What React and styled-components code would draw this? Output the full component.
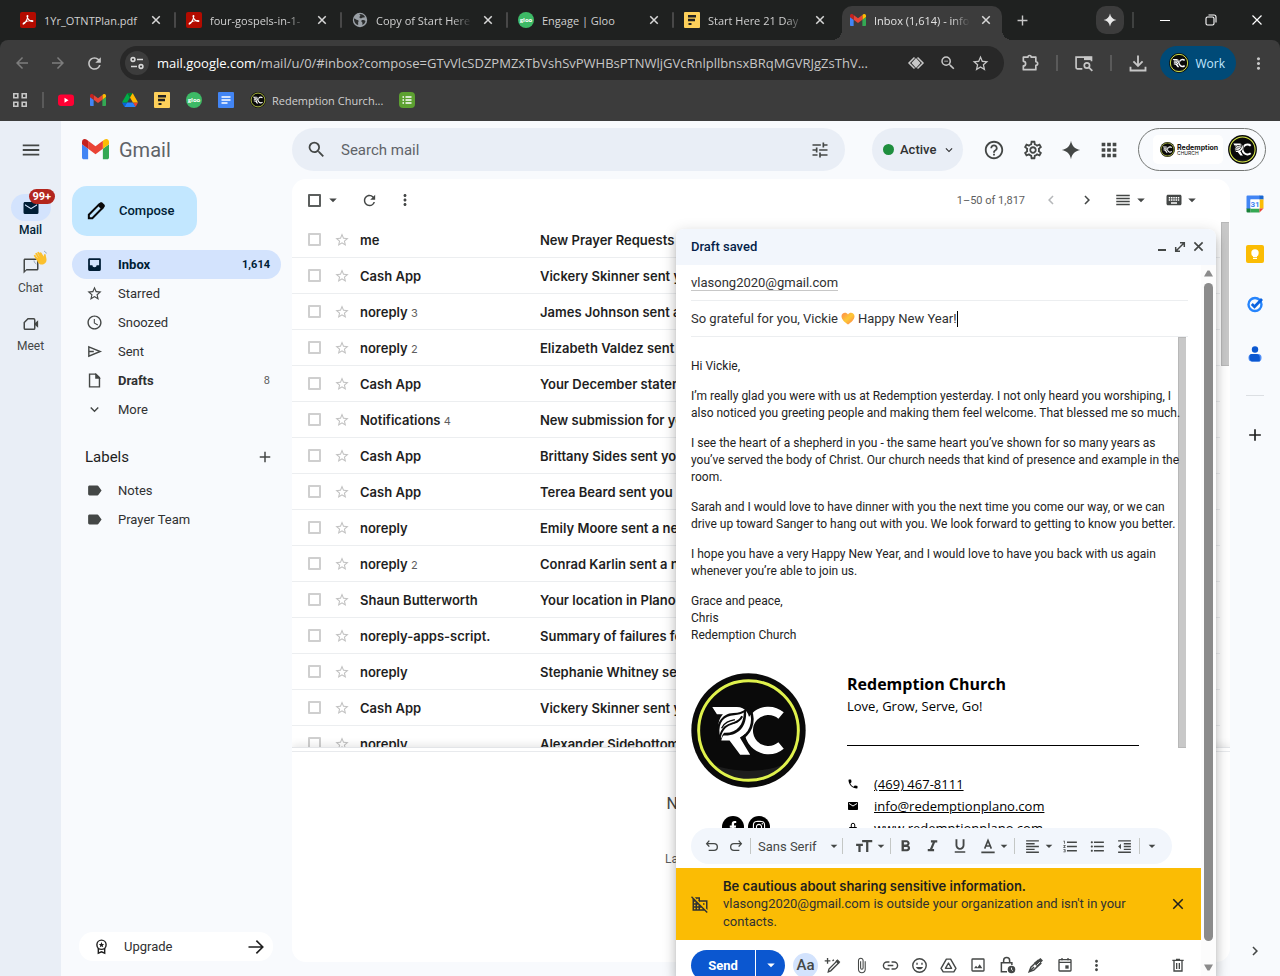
import React, { useState } from 'react';
import styled, { createGlobalStyle, css } from 'styled-components';
import {
  MdAccessTime,
  MdAdd,
  MdApps,
  MdArrowBack,
  MdArrowDropDown,
  MdArrowForward,
  MdAttachFile,
  MdChatBubbleOutline,
  MdChevronLeft,
  MdChevronRight,
  MdClose,
  MdDomainDisabled,
  MdEmail,
  MdFormatAlignLeft,
  MdFormatBold,
  MdFormatIndentDecrease,
  MdFormatItalic,
  MdFormatListBulleted,
  MdFormatListNumbered,
  MdFormatUnderlined,
  MdHelpOutline,
  MdKeyboard,
  MdKeyboardArrowDown,
  MdLabel,
  MdMenu,
  MdMoreVert,
  MdPhone,
  MdRefresh,
  MdReorder,
  MdSearch,
  MdStarBorder,
  MdTune,
  MdZoomOut,
  MdOutlineSettings,
} from 'react-icons/md';
import { FaFacebookF, FaInstagram } from 'react-icons/fa';

const GlobalStyle = createGlobalStyle`
  *, *::before, *::after {
    box-sizing: border-box;
  }
  body {
    margin: 0;
    overflow: hidden;
    font-family: Roboto, 'Liberation Sans', sans-serif;
    font-size: 13px;
    color: #1f1f1f;
  }
  button, input, select {
    font: inherit;
    color: inherit;
  }
  svg {
    display: block;
    flex: none;
  }
`;

const uiFont = `'Open Sans', 'Noto Sans', sans-serif`;

const Window = styled.div`
  height: 100vh;
  display: flex;
  flex-direction: column;
  background: #f8fafd;
`;

const IconButton = styled.button`
  display: flex;
  align-items: center;
  justify-content: ${p => (p.$pair ? 'flex-end' : 'center')};
  flex: none;
  width: ${p => p.$w || 28}px;
  height: ${p => p.$h || 28}px;
  padding: 0;
  border: none;
  border-radius: ${p => p.$radius || 14}px;
  background: ${p => p.$bg || 'transparent'};
  color: ${p => p.$color || '#444746'};
  cursor: pointer;
`;

/* ---------- browser frame ---------- */

const TabStrip = styled.div`
  display: flex;
  align-items: flex-end;
  height: 40px;
  flex: none;
  padding-left: 12px;
  background: #1f2120;
  font-family: ${uiFont};
  font-size: 11px;
`;

const Tab = styled.div`
  position: relative;
  display: flex;
  align-items: center;
  flex: 0 1 160px;
  min-width: 0;
  height: 34px;
  padding: 0 8px 6px;
  gap: 8px;
  color: #d0d0d0;
  border-radius: 10px 10px 0 0;
  ${p =>
    p.$active &&
    css`
      background: #3c3c3c;
      color: #e3e3e3;
      &::before,
      &::after {
        content: '';
        position: absolute;
        bottom: 0;
        width: 10px;
        height: 10px;
      }
      &::before {
        left: -10px;
        background: radial-gradient(circle at 0 0, transparent 10px, #3c3c3c 10px);
      }
      &::after {
        right: -10px;
        background: radial-gradient(circle at 100% 0, transparent 10px, #3c3c3c 10px);
      }
    `}
`;

const TabTitle = styled.span`
  flex: 1;
  min-width: 0;
  overflow: hidden;
  white-space: nowrap;
  ${p =>
    p.$fade &&
    css`
      mask-image: linear-gradient(90deg, #000 80%, transparent);
    `}
`;

const TabDivider = styled.span`
  flex: none;
  width: 2px;
  height: 16px;
  margin: 0 2px 12px;
  border-radius: 1px;
  background: ${p => (p.$hidden ? 'transparent' : '#484848')};
`;

const StripTools = styled.div`
  display: flex;
  align-items: center;
  flex: 1;
  height: 28px;
  margin-bottom: 6px;
  padding-left: 6px;
`;

const Spacer = styled.div`
  flex: 1;
`;

const Divider = styled.span`
  flex: none;
  width: ${p => p.$w || 2}px;
  height: ${p => p.$h || 16}px;
  margin: 0 ${p => p.$m || 0}px;
  background: ${p => p.$color || '#5a5a5a'};
`;

const Frame = styled.div`
  flex: none;
  background: #1f2120;
`;

const Toolbar = styled.div`
  display: flex;
  align-items: center;
  height: 46px;
  padding: 0 8px;
  background: #3c3c3c;
  border-radius: 8px 8px 0 0;
  font-family: ${uiFont};
`;

const Omnibox = styled.div`
  display: flex;
  align-items: center;
  flex: 1;
  min-width: 0;
  height: 34px;
  margin: 0 12px;
  padding: 0 8px 0 5px;
  border-radius: 17px;
  background: #282828;
  color: #c7c7c7;
`;

const Url = styled.div`
  flex: 1;
  min-width: 0;
  margin-left: 8px;
  overflow: hidden;
  white-space: nowrap;
  font-size: 13px;
  b {
    font-weight: 400;
    color: #fff;
  }
`;

const ProfileButton = styled.button`
  display: flex;
  align-items: center;
  gap: 6px;
  height: 34px;
  margin: 0 8px;
  padding: 0 11px 0 9px;
  border: none;
  border-radius: 17px;
  background: #004a77;
  color: #c2e7ff;
  font-size: 12px;
`;

const Bookmarks = styled.nav`
  display: flex;
  align-items: center;
  height: 35px;
  padding: 0 12px 7px;
  gap: 16px;
  background: #3c3c3c;
  color: #d0d0d0;
  font-family: ${uiFont};
`;

const Bookmark = styled.a`
  display: flex;
  align-items: center;
  gap: 6px;
  color: inherit;
  font-size: 11px;
  text-decoration: none;
`;

/* ---------- gmail shell ---------- */

const Gmail = styled.div`
  position: relative;
  display: flex;
  flex: 1;
  min-height: 0;
  background: #f8fafd;
`;

const AppRail = styled.nav`
  display: flex;
  flex-direction: column;
  align-items: center;
  flex: none;
  width: 61px;
  padding-top: 15px;
  background: #e9eef6;
`;

const RailItems = styled.div`
  margin-top: 30px;
`;

const RailItem = styled.a`
  display: flex;
  flex-direction: column;
  align-items: center;
  height: 58px;
  color: ${p => (p.$active ? '#001d35' : '#444746')};
  font-size: 12px;
  font-weight: ${p => (p.$active ? 500 : 400)};
  line-height: 18px;
  text-decoration: none;
`;

const RailIcon = styled.span`
  position: relative;
  display: flex;
  align-items: center;
  justify-content: center;
  width: 40px;
  height: 27px;
  border-radius: 14px;
  background: ${p => (p.$active ? '#d3e3fd' : 'transparent')};
`;

const Badge = styled.span`
  position: absolute;
  left: 18px;
  top: -5px;
  height: 15px;
  padding: 0 4px;
  border-radius: 8px;
  background: #b3261e;
  color: #fff;
  font-size: 11px;
  font-weight: 700;
  line-height: 15px;
`;

const Wave = styled.svg`
  position: absolute;
  left: 22px;
  top: -2px;
`;

const Sidebar = styled.aside`
  display: flex;
  flex-direction: column;
  flex: none;
  width: 231px;
  padding: 7px 11px 15px;
`;

const Brand = styled.div`
  display: flex;
  align-items: center;
  gap: 10px;
  height: 43px;
  padding-left: 10px;
  color: #5f6368;
  font-size: 20px;
`;

const ComposeButton = styled.button`
  display: flex;
  align-items: center;
  align-self: flex-start;
  gap: 12px;
  width: 125px;
  height: 50px;
  margin: 15px 0 14px;
  padding: 0 13px 1px;
  border: none;
  border-radius: 15px;
  background: #c2e7ff;
  color: #001d35;
  font-weight: 500;
`;

const NavItem = styled.a`
  display: flex;
  align-items: center;
  gap: 15px;
  height: 29px;
  padding: 0 11px 0 14px;
  border-radius: 15px;
  background: ${p => (p.$active ? '#d3e3fd' : 'transparent')};
  color: ${p => (p.$active ? '#001d35' : '#303132')};
  font-weight: ${p => (p.$bold ? 700 : 400)};
  text-decoration: none;
  svg {
    color: ${p => (p.$active ? '#001d35' : '#444746')};
  }
`;

const NavCount = styled.span`
  margin-left: auto;
  color: ${p => (p.$active ? '#001d35' : '#5e5e5e')};
  font-size: 11px;
  font-weight: ${p => (p.$active ? 700 : 400)};
`;

const LabelsHead = styled.div`
  display: flex;
  align-items: center;
  justify-content: space-between;
  height: 29px;
  margin: 18px 2px 5px 13px;
  font-size: 15px;
`;

const Upgrade = styled.a`
  display: flex;
  align-items: center;
  gap: 14px;
  height: 29px;
  margin: auto 8px 0 7px;
  padding: 0 8px 0 14px;
  border-radius: 14px;
  background: #fff;
  color: #303132;
  text-decoration: none;
`;

const Center = styled.div`
  display: flex;
  flex-direction: column;
  flex: 1;
  min-width: 0;
`;

const Header = styled.header`
  display: flex;
  align-items: center;
  flex: none;
  height: 58px;
  padding: 0 14px 1px 0;
`;

const SearchBox = styled.label`
  display: flex;
  align-items: center;
  gap: 12px;
  flex: 0 1 553px;
  height: 43px;
  padding: 0 15px 0 14px;
  border-radius: 22px;
  background: #e9eef6;
  color: #444746;
  input {
    flex: 1;
    min-width: 0;
    padding: 0 2px;
    border: none;
    outline: none;
    background: transparent;
    font-size: 15px;
  }
  input::placeholder {
    color: #5f6368;
    opacity: 1;
  }
`;

const Status = styled.button`
  display: flex;
  align-items: center;
  gap: 6px;
  height: 43px;
  margin: 0 12px 0 27px;
  padding: 0 7px 0 11px;
  border: none;
  border-radius: 22px;
  background: #e9eef6;
  color: #303132;
  font-weight: 500;
  i {
    width: 11px;
    height: 11px;
    border-radius: 50%;
    background: #1e8e3e;
  }
`;

const HeaderTools = styled.div`
  display: flex;
  align-items: center;
  gap: 2px;
`;

const Account = styled.button`
  display: flex;
  align-items: center;
  gap: 5px;
  height: 43px;
  margin-left: auto;
  padding: 0 8px 0 14px;
  border: 1px solid #747775;
  border-radius: 22px;
  background: transparent;
`;

const OrgLogo = styled.span`
  display: flex;
  align-items: center;
  gap: 2px;
  width: 70px;
  height: 29px;
  padding-left: 7px;
  border-radius: 5px;
  background: #fff;
  color: #111;
  font-family: Inter, sans-serif;
  font-size: 7px;
  font-weight: 700;
  line-height: 7px;
  text-align: left;
  small {
    display: block;
    font-size: 5px;
    font-weight: 400;
    line-height: 5px;
  }
`;

const Body = styled.div`
  display: flex;
  flex: 1;
  min-height: 0;
`;

const MailPanel = styled.main`
  display: flex;
  flex-direction: column;
  flex: 1;
  min-width: 0;
  margin-bottom: 14px;
  border-radius: 14px;
  background: #fff;
  overflow: hidden;
`;

const ListToolbar = styled.div`
  display: flex;
  align-items: center;
  flex: none;
  height: 43px;
  padding: 0 19px 1px 16px;
`;

const Check = styled.input`
  appearance: none;
  flex: none;
  width: 13px;
  height: 13px;
  margin: 0 1px 0 0;
  border: 2px solid ${p => (p.$dark ? '#5c5f5e' : '#cfcfcf')};
  border-radius: 1px;
  background: #fff;
`;

const PageInfo = styled.span`
  margin: 0 12px 0 auto;
  color: #5e5e5e;
  font-size: 11px;
`;

const ListScroll = styled.div`
  display: flex;
  align-items: flex-start;
  flex: 1;
  min-height: 0;
  overflow: hidden;
`;

const MailList = styled.ul`
  flex: 1;
  min-width: 0;
  margin: 0;
  padding: 0;
  list-style: none;
`;

const MailRow = styled.li`
  display: flex;
  align-items: center;
  height: 36px;
  padding-left: 16px;
  border-bottom: 1px solid #eceef0;
  font-family: Inter, sans-serif;
  font-weight: 600;
  white-space: nowrap;
`;

const StarButton = styled.button`
  margin: 0 10px 0 12px;
  padding: 0;
  border: none;
  background: none;
  color: #c2c2c2;
`;

const Sender = styled.span`
  flex: none;
  width: 180px;
  small {
    color: #5e5e5e;
    font-size: 11px;
    font-weight: 400;
  }
`;

const Subject = styled.span`
  overflow: hidden;
`;

const ListThumb = styled.div`
  flex: none;
  width: 8px;
  height: 144px;
  margin: 0 1px;
  border: 1px solid #b8b8b8;
  border-right: none;
  background: #c8c8c8;
`;

const Preview = styled.section`
  flex: none;
  height: 215px;
  padding-top: 40px;
  border-top: 1px solid #e3e5e8;
  box-shadow: inset 0 3px 0 #fff, inset 0 4px 0 #e8eaed, 0 -2px 8px rgba(0, 0, 0, 0.1);
  color: #444746;
  font-size: 16px;
  text-align: center;
  p {
    margin: 7px 0 35px;
    line-height: 18px;
  }
  small {
    font-size: 12px;
    color: #5e5e5e;
  }
`;

const SidePanel = styled.aside`
  display: flex;
  flex-direction: column;
  align-items: center;
  flex: none;
  width: 50px;
  padding: 14px 0 11px;
  gap: 28px;
  hr {
    width: 18px;
    margin: 2px 0;
    border: none;
    border-top: 1px solid #dcdfe3;
  }
`;

const PanelLink = styled.button`
  display: flex;
  padding: 2px;
  border: none;
  background: none;
`;

/* ---------- compose window ---------- */

const Compose = styled.section`
  position: absolute;
  right: 64px;
  top: 108px;
  bottom: 0;
  width: 540px;
  display: flex;
  flex-direction: column;
  border-radius: 8px 8px 0 0;
  background: #fff;
  box-shadow: 0 8px 10px 1px rgba(0, 0, 0, 0.14), 0 3px 14px 2px rgba(0, 0, 0, 0.12),
    0 5px 5px -3px rgba(0, 0, 0, 0.2);
`;

const ComposeHead = styled.header`
  display: flex;
  align-items: center;
  flex: none;
  height: 36px;
  padding: 0 9px 1px 15px;
  border-radius: 8px 8px 0 0;
  background: #f2f6fc;
  h2 {
    margin: 0 auto 0 0;
    color: #041e49;
    font-size: 13px;
    font-weight: 500;
  }
`;

const ComposeBody = styled.div`
  display: flex;
  flex: 1;
  min-height: 0;
`;

const ComposeMain = styled.div`
  display: flex;
  flex-direction: column;
  flex: 1;
  min-width: 0;
`;

const Field = styled.div`
  display: flex;
  align-items: center;
  flex: none;
  height: 36px;
  margin: 0 13px 0 15px;
  border-bottom: 1px solid #eceef0;
  color: #303132;
  input {
    field-sizing: content;
    padding: 0;
    border: none;
    outline: none;
    background: transparent;
  }
`;

const Recipient = styled.span`
  border-bottom: 1px solid #c7c7c7;
`;

const HeartSlot = styled.svg`
  margin: 0 3px;
`;

const Caret = styled.span`
  width: 1px;
  height: 16px;
  background: #000;
`;

const MessageWrap = styled.div`
  display: flex;
  flex: 1;
  min-height: 0;
  padding: 0 15px;
  overflow: hidden;
`;

const Message = styled.div`
  z-index: 1;
  flex: 1;
  min-width: 0;
  padding-top: 21px;
  font-size: 12px;
  line-height: 17px;
  color: #222;
  outline: none;
  white-space: nowrap;
  p {
    margin: 0 0 13px;
  }
`;

const MessageThumb = styled.div`
  flex: none;
  width: 8px;
  height: 411px;
  border: 1px solid #b8b8b8;
  border-right: none;
  background: #c8c8c8;
`;

const Signature = styled.div`
  display: flex;
  gap: 41px;
  margin-top: 29px;
  font-family: 'Open Sans', sans-serif;
  font-size: 13px;
  line-height: 22px;
  color: #000;
`;

const SignatureLogo = styled.div`
  width: 115px;
`;

const Socials = styled.div`
  display: flex;
  justify-content: center;
  gap: 4px;
  margin: 28px 6px 0 0;
`;

const SocialLink = styled.a`
  display: flex;
  align-items: center;
  justify-content: center;
  width: 22px;
  height: 22px;
  border-radius: 50%;
  background: #000;
  color: #fff;
`;

const SignatureText = styled.div`
  width: 292px;
  h3 {
    margin: 0;
    font-size: 16px;
    font-weight: 700;
  }
  hr {
    margin: 28px 0 27px;
    border: none;
    border-top: 1px solid #000;
  }
`;

const ContactLine = styled.div`
  display: flex;
  align-items: center;
  gap: 15px;
  a {
    color: inherit;
  }
`;

const FormatBar = styled.div`
  display: flex;
  align-items: center;
  flex: none;
  height: 36px;
  margin: 0 29px 4px 15px;
  padding: 0 9px;
  border-radius: 18px;
  background: #f2f6fc;
`;

const FontPicker = styled.label`
  display: flex;
  align-items: center;
  flex: none;
  width: 84px;
  margin-left: 5px;
  color: #444746;
  select {
    appearance: none;
    flex: 1;
    min-width: 0;
    padding: 0;
    border: none;
    background: transparent;
  }
`;

const Caution = styled.div`
  display: flex;
  align-items: center;
  flex: none;
  height: 72px;
  padding: 0 15px;
  gap: 14px;
  background: #fbbc04;
  color: #303132;
  line-height: 18px;
  p {
    flex: 1;
    margin: 0;
  }
  b {
    display: block;
    color: #1f1f1f;
    font-family: Inter, sans-serif;
    font-weight: 600;
  }
`;

const SendBar = styled.div`
  display: flex;
  align-items: center;
  flex: none;
  height: 30px;
  margin: 10px 0 -4px;
  padding: 0 9px 0 15px;
`;

const SendButton = styled.button`
  height: 31px;
  width: 64px;
  padding: 0;
  border: none;
  border-radius: 16px 0 0 16px;
  background: #0b57d0;
  color: #fff;
  font-weight: 700;
`;

const SendMore = styled(SendButton)`
  display: flex;
  align-items: center;
  justify-content: center;
  width: 29px;
  margin: 0 8px 0 1px;
  border-radius: 0 16px 16px 0;
`;

const TextTools = styled(IconButton)`
  font-size: 15px;
  font-weight: 500;
`;

const ComposeScroll = styled.div`
  display: flex;
  flex-direction: column;
  align-items: center;
  flex: none;
  width: 15px;
  padding: 4px 0;
  gap: 5px;
  background: #fcfcfc;
`;

const ComposeThumb = styled.div`
  width: 9px;
  flex: 1;
  margin-bottom: 17px;
  border-radius: 5px;
  background: #8b8b8b;
`;

/* ---------- drawings ---------- */

const Svg = ({ size = 16, box = 24, children, ...rest }) => (
  <svg width={size} height={size} viewBox={`0 0 ${box} ${box}`} fill="none" aria-hidden="true" {...rest}>
    {children}
  </svg>
);

const GmailLogo = ({ width = 16 }) => (
  <svg width={width} height={width * 0.75} viewBox="52 42 88 66" aria-hidden="true">
    <path fill="#4285f4" d="M58 108h14V74L52 59v43c0 3.32 2.69 6 6 6" />
    <path fill="#34a853" d="M120 108h14c3.32 0 6-2.69 6-6V59l-20 15" />
    <path fill="#fbbc04" d="M120 48v26l20-15v-8c0-7.42-8.47-11.65-14.4-7.2" />
    <path fill="#ea4335" d="M72 74V48l24 18 24-18v26L96 92" />
    <path fill="#c5221f" d="M52 51v8l20 15V48l-5.600-4.200c-5.940-4.450-14.400-.22-14.400 7.200" />
  </svg>
);

const ChurchLogo = ({ size = 16, ring = 9 }) => (
  <svg width={size} height={size} viewBox="0 0 346 346" aria-hidden="true">
    <circle cx="173" cy="173" r="172" fill="#0a0a0a" />
    <path fill="#1d1d1d" d="M60 274c66 26 160 30 230-4-50 68-172 72-230 4z" />
    <circle cx="173" cy="173" r="150" fill="none" stroke="#e0f24c" strokeWidth={ring} />
    {/* stem of the R, the leaf is cut out of it below */}
    <path
      fill="#fff"
      d="M64 102H138C164 102 178 124 176 150C175 172 164 187 147 194L178 246H148L116 203H82V166C82 146 86 136 96 124H78Z"
    />
    <path fill="#0a0a0a" d="M78 206C70 156 92 120 128 120C144 120 154 116 165 108C171 152 150 190 98 188C94 192 92 198 91 206Z" />
    <path fill="#fff" d="M86 184C82 148 100 128 130 127C144 126 152 124 159 119C158 156 138 182 100 180C96 183 93 190 91 197Z" />
    <path fill="none" stroke="#0a0a0a" strokeWidth="6" d="M86 196C94 160 112 156 130 150C142 146 150 138 154 130" />
    <path fill="none" stroke="#0a0a0a" strokeWidth="4" d="M92 166C100 148 116 144 132 140" />
    <path fill="none" stroke="#fff" strokeWidth="25" d="M271 128A59 59 0 1 0 271 218" />
    <path fill="none" stroke="#0a0a0a" strokeWidth="8" d="M172 100C194 132 186 174 156 194L190 252" />
  </svg>
);

const PdfIcon = () => (
  <Svg box={16}>
    <rect width="16" height="16" rx="2" fill="#b30b00" />
    <path
      d="M3.500 12c1-.3 3.800-3.500 4.300-7.800.1-1-.9-.9-.7.200.3 2 2.300 4.600 5 5 1.200.1 1-.9-.3-.9-3 0-6.300 1-8 2.500-.7.700-.9 1.200-.3 1z"
      stroke="#fff"
      strokeWidth="1.200"
    />
  </Svg>
);

const GlobeIcon = () => (
  <Svg box={16}>
    <circle cx="8" cy="8" r="7.200" fill="#9aa0a6" />
    <path
      fill="#2b2d2d"
      d="M2 6.500c1.500 0 2 1.500 3.500 1.500 1 0 1.500 1 .8 2-.5.800.2 1.500-.2 3C3.500 12.500 1.800 9.500 2 6.500zM7 2c3-.3 5 1 6 3-1 .8-2 .2-3 1-.8.600-2 .5-2.500-.5C7.200 4.500 8.500 4 8.300 3.200 8 2.500 7.300 2.500 7 2zM9.500 8.500c1.500-.8 3-.2 4 .5-.3 1.800-1.500 3.400-3 4-.5-1 .3-1.700-.2-2.500-.6-.7-1.500-1.300-.8-2z"
    />
  </Svg>
);

const GlooText = styled.span`
  display: flex;
  align-items: center;
  justify-content: center;
  flex: none;
  width: 16px;
  height: 16px;
  padding-bottom: 1px;
  border-radius: 50%;
  background: #3dba66;
  color: #fff;
  font-size: 6px;
  font-weight: 700;
`;

const FIcon = () => (
  <Svg box={16}>
    <rect width="16" height="16" rx="1" fill="#fdd05a" />
    <path fill="#222" d="M4 3h8v2.500H4zM4 6.700h7v2.500H4zM4.500 11h3v2h-3z" />
  </Svg>
);

const DocsIcon = () => (
  <Svg box={16}>
    <rect width="16" height="16" rx="1" fill="#4285f4" />
    <path d="M3.500 5h9M3.500 8h9M3.500 11h6" stroke="#fff" strokeWidth="1.500" />
  </Svg>
);

const YoutubeIcon = () => (
  <Svg box={16}>
    <rect y="2.500" width="16" height="11.500" rx="3" fill="#ff0033" />
    <path fill="#fff" d="M6.500 5.800v4.900l4-2.450z" />
  </Svg>
);

const DriveIcon = () => (
  <svg width="16" height="14" viewBox="0 0 87.3 78" aria-hidden="true">
    <path fill="#0066da" d="m6.600 66.850 3.850 6.650c.8 1.400 1.950 2.500 3.300 3.300l13.750-23.800h-27.500c0 1.550.4 3.100 1.200 4.500z" />
    <path fill="#00ac47" d="m43.650 25-13.750-23.800c-1.350.8-2.500 1.900-3.300 3.300l-25.400 44a9.060 9.060 0 0 0-1.200 4.500h27.500z" />
    <path fill="#ea4335" d="m73.550 76.800c1.350-.8 2.500-1.900 3.300-3.300l1.600-2.750 7.650-13.250c.8-1.400 1.200-2.950 1.200-4.500h-27.500l5.850 11.500z" />
    <path fill="#00832d" d="m43.650 25 13.750-23.800c-1.350-.8-2.900-1.200-4.500-1.200h-18.500c-1.600 0-3.150.45-4.500 1.200z" />
    <path fill="#2684fc" d="m59.800 53h-32.300l-13.750 23.800c1.350.8 2.900 1.200 4.500 1.200h50.800c1.600 0 3.150-.45 4.500-1.200z" />
    <path fill="#ffba00" d="m73.400 26.500-12.700-22c-.8-1.400-1.950-2.500-3.300-3.300l-13.750 23.800 16.150 28h27.450c0-1.550-.4-3.100-1.200-4.500z" />
  </svg>
);

const ListAppIcon = () => (
  <Svg box={16}>
    <rect width="16" height="16" rx="4" fill="#5da131" />
    <path d="M3.500 5h1.500M3.500 8h1.500M3.500 11h1.500M6.500 5h6M6.500 8h6M6.500 11h6" stroke="#fff" strokeWidth="1.500" />
  </Svg>
);

const GridIcon = () => (
  <Svg box={16} stroke="#c7c7c7" strokeWidth="1.600">
    <path d="M1.800 1.800h4v4h-4zM10.200 1.800h4v4h-4zM1.800 10.200h4v4h-4zM10.200 10.200h4v4h-4z" />
  </Svg>
);

const SparkIcon = ({ size }) => (
  <Svg size={size}>
    <path fill="currentColor" d="M12 1c1.300 6.500 4.500 9.700 11 11-6.500 1.300-9.700 4.500-11 11-1.300-6.500-4.500-9.700-11-11 6.500-1.300 9.700-4.500 11-11z" />
  </Svg>
);

const SiteInfoIcon = () => (
  <Svg box={16} stroke="#d8d8d8" strokeWidth="1.600">
    <circle cx="4" cy="4.500" r="1.900" />
    <path d="M8 4.500h6M2 11.500h6" />
    <circle cx="12" cy="11.500" r="1.900" />
  </Svg>
);

const LensIcon = () => (
  <Svg box={18} size={18} stroke="currentColor" strokeWidth="1.500">
    <path d="M7.500 3.500 2 9l5.500 5.500M10.500 3.500 16 9l-5.500 5.500" />
    <path fill="currentColor" stroke="none" d="M9 4 13.500 9 9 14 4.500 9z" />
  </Svg>
);

const PuzzleIcon = () => (
  <Svg size={20} stroke="currentColor" strokeWidth="2">
    <path d="M4 5h5.500a2 2 0 0 1 4 0H19v5.500a2.200 2.200 0 0 1 0 4.400V20H4v-4.500a2.700 2.700 0 0 0 0-5.500z" strokeLinejoin="round" />
  </Svg>
);

const TabSearchIcon = () => (
  <Svg size={20} stroke="currentColor" strokeWidth="2">
    <path d="M10 19H4a1.500 1.500 0 0 1-1.500-1.500V5H21v5" />
    <path d="M12 6.500h9" strokeWidth="4" />
    <circle cx="15.500" cy="15" r="3.200" />
    <path d="m18 17.500 4 4" />
  </Svg>
);

const DownloadIcon = () => (
  <Svg size={20} stroke="currentColor" strokeWidth="2.200">
    <path d="M12 3v12M6.500 10l5.500 5.500 5.500-5.500M3 16.500V21h18v-4.500" />
  </Svg>
);

const RestoreIcon = () => (
  <Svg box={12} size={12} stroke="#fff" strokeWidth="1.100">
    <rect x="1" y="3" width="8" height="8" rx="1.500" />
    <path d="M3.500 1H9a2 2 0 0 1 2 2v5.500" />
  </Svg>
);

const ThinClose = ({ size = 12, color = 'currentColor', stroke = 1.2 }) => (
  <Svg box={12} size={size} stroke={color} strokeWidth={stroke}>
    <path d="m1.500 1.500 9 9M10.500 1.500l-9 9" />
  </Svg>
);

const PencilIcon = () => (
  <Svg size={22}>
    <path d="M4.200 19.800V16L15.500 4.700l3.800 3.800L8 19.800z" stroke="#0a0a0a" strokeWidth="2.200" />
    <path d="m13.500 5.700 3-3c.5-.5 1.800-.5 2.300 0l2.500 2.500c.5.5.5 1.800 0 2.300l-3 3z" fill="#0a0a0a" />
  </Svg>
);

const MeetIcon = () => (
  <Svg size={18} stroke="currentColor" strokeWidth="2">
    <path d="M8 5h7.500a1.500 1.500 0 0 1 1.500 1.500v11a1.500 1.500 0 0 1-1.500 1.500h-11A1.500 1.500 0 0 1 3 17.500V10z" />
    <path fill="currentColor" stroke="none" d="m17 11 4.500-4v10L17 13z" />
  </Svg>
);

const WavingHand = () => (
  <Wave width="15" height="16" viewBox="0 0 15 16" aria-hidden="true">
    <path
      d="M4 9 1.800 5.800M6 8 3.300 3.800M7.800 7 5.300 2.800M9.500 6.500 7.600 3.300"
      stroke="#fbc02d"
      strokeWidth="1.900"
      strokeLinecap="round"
    />
    <path fill="#fbc02d" d="M3 8.500 9.500 5l1.200 1.800c.2-1.500.3-2.800 1.200-2.800 1.200 0 .7 2 1.400 4 .8 2.800-.3 5-2.300 6-2.500 1.200-4.700.4-6-1.500z" />
    <path d="M11 1.200c1.300.4 2 1.200 2.300 2.300M1 10.500c.3 1.700 1 2.700 2.300 3.500" stroke="#8a9bb0" strokeWidth="0.900" fill="none" />
  </Wave>
);

const InboxIcon = () => (
  <Svg size={17}>
    <path
      fill="currentColor"
      fillRule="evenodd"
      d="M5 3h14a2 2 0 0 1 2 2v14a2 2 0 0 1-2 2H5a2 2 0 0 1-2-2V5c0-1.100.9-2 2-2zm.5 2.500V13H9a3 3 0 0 0 6 0h3.500V5.500z"
    />
  </Svg>
);

const SendOutline = () => (
  <Svg size={17} stroke="currentColor" strokeWidth="2">
    <path d="M4 5.500 20 12 4 18.500zM4 12h7" />
  </Svg>
);

const DraftIcon = () => (
  <Svg size={17} stroke="currentColor" strokeWidth="2">
    <path d="M5 3h9l5 5v13H5z" />
    <path fill="currentColor" d="M14 4v4.500h4.500z" />
  </Svg>
);

const PremiumIcon = () => (
  <Svg size={17} stroke="#1f1f1f" strokeWidth="2">
    <circle cx="12" cy="9.500" r="6.500" />
    <path d="M7.500 14v7.500l4.500-2 4.500 2V14" />
    <path fill="#1f1f1f" stroke="none" d="m12 5.800 1.100 2.500 2.700.3-2 1.800.6 2.700-2.400-1.400-2.400 1.400.6-2.700-2-1.800 2.700-.3z" />
  </Svg>
);

const ArrowIcon = () => (
  <Svg size={18} stroke="#1f1f1f" strokeWidth="2.200">
    <path d="M2 12h19M12.500 3.500 21 12l-8.500 8.500" />
  </Svg>
);

const CalendarApp = () => (
  <Svg size={18} box={18}>
    <path fill="#4285f4" d="M1.500.5H14v4H4.500V14h-4V1.500a1 1 0 0 1 1-1z" />
    <path fill="#1967d2" d="M13.500.5h3a1 1 0 0 1 1 1v3h-4z" />
    <path fill="#fbbc04" d="M13.500 4.500h4v9h-4z" />
    <path fill="#34a853" d="M4.500 13.500h9v4h-9z" />
    <path fill="#188038" d="M.5 13.500h4v4h-3a1 1 0 0 1-1-1z" />
    <path fill="#ea4335" d="M13.500 17.500v-4h4z" />
    <path fill="#fff" d="M4.500 4.500h9v9h-9z" />
    <text x="9" y="11.800" fontSize="8" fontWeight="700" textAnchor="middle" fill="#4285f4">
      31
    </text>
  </Svg>
);

const KeepApp = () => (
  <Svg size={18} box={18}>
    <rect width="18" height="18" rx="2" fill="#fbbc04" />
    <circle cx="9" cy="8" r="3.700" fill="#fff" />
    <path fill="#fff" d="M7 10h4v2H7zM7 12.800h4V14H7z" />
  </Svg>
);

const TasksApp = () => (
  <Svg size={18} box={18}>
    <circle cx="9" cy="9.500" r="6.500" stroke="#2684fc" strokeWidth="2.400" />
    <path d="m5.800 9 2.700 2.700L16 4" stroke="#0b63e0" strokeWidth="2.800" />
  </Svg>
);

const ContactsApp = () => (
  <Svg size={18} box={18}>
    <circle cx="9" cy="4.500" r="3.200" fill="#0b57d0" />
    <rect x="2.500" y="9" width="13" height="7.500" rx="3.500" fill="#4f8df5" />
    <path fill="#0b57d0" d="M5 9h5c2.500 0 3.800 1.500 3.800 3.500v4H6.500C4 16.500 3.500 14 3.500 12c0-1.500.5-2.500 1.500-3z" />
  </Svg>
);

const Heart = () => (
  <HeartSlot width="14" height="13" viewBox="0 0 14 13" aria-label="yellow heart">
    <defs>
      <linearGradient id="heart" x1="0" y1="0" x2="1" y2="1">
        <stop offset="0" stopColor="#ff8a4c" />
        <stop offset="0.5" stopColor="#fdc935" />
        <stop offset="1" stopColor="#ff7a50" />
      </linearGradient>
    </defs>
    <path fill="url(#heart)" d="M7 12.500C4 10.500.5 7.500.5 4.200c0-3.600 4.800-4.900 6.500-1.600 1.700-3.300 6.500-2 6.500 1.600 0 3.300-3.500 6.300-6.500 8.300z" />
  </HeartSlot>
);

const ExpandIcon = () => (
  <Svg size={12} box={12} stroke="currentColor" strokeWidth="1.500">
    <path d="M2 10 10 2M6 1.700h4.300V6M1.700 6v4.300H6" />
  </Svg>
);

const UndoIcon = ({ flip }) => (
  <Svg size={16} stroke="currentColor" strokeWidth="2">
    <path
      d={flip ? 'm16 4 4 4.500-4 4.500M20 8.500H9a5 5 0 0 0 0 10h8' : 'M8 4 4 8.500 8 13M4 8.500h11a5 5 0 0 1 0 10H7'}
    />
  </Svg>
);

const SizeIcon = () => (
  <Svg size={18} stroke="currentColor" strokeWidth="3">
    <path d="M9.500 5.500H23M16.300 5.500V20M1.500 10.500h9M6 10.500V20" />
  </Svg>
);

const ColorIcon = () => (
  <Svg size={16} stroke="currentColor" strokeWidth="2.400">
    <path d="M7 16 12 3.500 17 16M8.800 12h6.400M2 21.500h20" />
  </Svg>
);

const MagicPenIcon = () => (
  <Svg size={17} stroke="currentColor" strokeWidth="1.900">
    <path d="m6 21 1-4L18.500 5.500l2.500 2.500L9.500 19.500zM5 1.500v8M1 5.500h8M14 4l-2 1.500" />
    <path d="m16 6 3-3 4 4-3 3z" fill="currentColor" stroke="none" />
  </Svg>
);

const LinkIcon = () => (
  <Svg size={17} stroke="currentColor" strokeWidth="2">
    <path d="M10.500 7H7a5 5 0 0 0 0 10h3.500M13.500 7H17a5 5 0 0 1 0 10h-3.500M8 12h8" />
  </Svg>
);

const SmileIcon = () => (
  <Svg size={17} stroke="currentColor" strokeWidth="2">
    <circle cx="12" cy="12" r="9.500" />
    <path d="M7 14c1.500 4.500 8.500 4.500 10 0z" fill="currentColor" stroke="none" />
    <path d="M8.500 8v3M15.500 8v3" />
  </Svg>
);

const DriveOutline = () => (
  <Svg size={17} stroke="currentColor" strokeWidth="2" strokeLinejoin="round">
    <path d="M9 3h6l7.500 13-3 5h-15l-3-5z" />
    <path d="m12 8.500 4.300 7.500H7.700z" />
  </Svg>
);

const ImageIcon = () => (
  <Svg size={16} stroke="currentColor" strokeWidth="2">
    <rect x="3" y="3" width="18" height="18" rx="1" />
    <path fill="currentColor" stroke="none" d="m6 17 3-4 2.300 2.700L14.500 11 18.500 17z" />
  </Svg>
);

const LockClockIcon = () => (
  <Svg size={18} stroke="currentColor" strokeWidth="2">
    <path d="M12 21H4.500V9h14v3M7.500 9V6a4 4 0 0 1 8 0v3" />
    <circle cx="18" cy="18" r="5" fill="currentColor" stroke="none" />
    <path d="M18 15.500V18l1.800 1.500" stroke="#fff" strokeWidth="1.200" />
  </Svg>
);

const SignPenIcon = () => (
  <Svg size={17} stroke="currentColor" strokeWidth="2">
    <path d="m3 21 2.500-6.500L15.500 5l4 4-10 9.500zM3 21l7-7" />
    <path fill="currentColor" stroke="none" d="m10 8 9-6.500 3.500 3.500-8.500 9z" />
    <path d="m13.500 12 5-5" stroke="#fff" strokeWidth="1.200" />
  </Svg>
);

const EventIcon = () => (
  <Svg size={16} stroke="currentColor" strokeWidth="2">
    <rect x="3" y="4" width="18" height="17" rx="1" />
    <path d="M3 8h18M7.500 1.500V5M16.500 1.500V5" />
    <path fill="currentColor" stroke="none" d="M12.500 12.500h5v5h-5z" />
  </Svg>
);

const TrashIcon = () => (
  <Svg size={16} stroke="currentColor" strokeWidth="2">
    <path d="M6 6v15h12V6M3.500 5h17M9 3.500h6M10 9v9M14 9v9" />
  </Svg>
);

const MailIcon = () => (
  <Svg size={18}>
    <path fill="#001d35" d="M4 4h16a2 2 0 0 1 2 2v12a2 2 0 0 1-2 2H4a2 2 0 0 1-2-2V6c0-1.100.9-2 2-2zm0 3v1.500l8 5 8-5V7l-8 5z" />
  </Svg>
);

const LockIcon = () => (
  <Svg size={12} stroke="#000" strokeWidth="2">
    <path d="M8.500 11V6a3.500 3.500 0 0 1 7 0v5M5 11h14v10H5z" />
  </Svg>
);

const Arrow = ({ down }) => (
  <Svg size={9} box={9}>
    <path fill="#8b8b8b" d={down ? 'M0 1.500h9L5.500 7.500h-2z' : 'M0 7.500h9L5.500 1.500h-2z'} />
  </Svg>
);

/* ---------- data ---------- */

const tabs = [
  { title: '1Yr_OTNTPlan.pdf', icon: <PdfIcon /> },
  { title: 'four-gospels-in-1-', icon: <PdfIcon />, fade: true },
  { title: 'Copy of Start Here', icon: <GlobeIcon />, fade: true },
  { title: 'Engage | Gloo', icon: <GlooText>gloo</GlooText> },
  { title: 'Start Here 21 Day', icon: <FIcon />, fade: true },
  { title: 'Inbox (1,614) - info', icon: <GmailLogo />, active: true, fade: true },
];

const folders = [
  { label: 'Inbox', icon: <InboxIcon />, count: '1,614', active: true, bold: true },
  { label: 'Starred', icon: <MdStarBorder size={17} /> },
  { label: 'Snoozed', icon: <MdAccessTime size={17} /> },
  { label: 'Sent', icon: <SendOutline /> },
  { label: 'Drafts', icon: <DraftIcon />, count: '8', bold: true },
  { label: 'More', icon: <MdKeyboardArrowDown size={17} /> },
];

const mails = [
  ['me', '', 'New Prayer Requests -'],
  ['Cash App', '', 'Vickery Skinner sent you'],
  ['noreply', 3, 'James Johnson sent a'],
  ['noreply', 2, 'Elizabeth Valdez sent a'],
  ['Cash App', '', 'Your December statement'],
  ['Notifications', 4, 'New submission for your'],
  ['Cash App', '', 'Brittany Sides sent you'],
  ['Cash App', '', 'Terea Beard sent you $'],
  ['noreply', '', 'Emily Moore sent a new'],
  ['noreply', 2, 'Conrad Karlin sent a new'],
  ['Shaun Butterworth', '', 'Your location in Plano'],
  ['noreply-apps-script.', '', 'Summary of failures for'],
  ['noreply', '', 'Stephanie Whitney sent'],
  ['Cash App', '', 'Vickery Skinner sent you'],
  ['noreply', '', 'Alexander Sidebottom'],
];

const sendTools = [
  ['Help me write', <MagicPenIcon />],
  ['Attach files', <MdAttachFile size={17} />],
  ['Insert link', <LinkIcon />],
  ['Insert emoji', <SmileIcon />],
  ['Insert from Drive', <DriveOutline />],
  ['Insert photo', <ImageIcon />],
  ['Confidential mode', <LockClockIcon />],
  ['Insert signature', <SignPenIcon />],
  ['Set up a time', <EventIcon />],
];

/* ---------- sections ---------- */

const BrowserFrame = () => (
  <Frame>
    <TabStrip>
      {tabs.map((tab, i) => (
        <React.Fragment key={tab.title}>
          <Tab $active={tab.active}>
            {tab.icon}
            <TabTitle $fade={tab.fade}>{tab.title}</TabTitle>
            <IconButton $w={16} $h={16} $color="#d8d8d8" aria-label="Close tab">
              <ThinClose size={10} stroke={1.8} />
            </IconButton>
          </Tab>
          {!tab.active && <TabDivider $hidden={i === 4} />}
        </React.Fragment>
      ))}
      <StripTools>
        <IconButton $color="#c7c7c7" aria-label="New tab">
          <MdAdd size={17} />
        </IconButton>
        <Spacer />
        <IconButton $bg="#3c3c3c" $radius={10} $color="#e8e8e8" aria-label="Gemini">
          <SparkIcon size={14} />
        </IconButton>
        <Divider $m={8} $color="#3f4140" />
        <IconButton $w={46} aria-label="Minimize">
          <Svg size={10} box={10} stroke="#fff">
            <path d="M0 5.500h10" />
          </Svg>
        </IconButton>
        <IconButton $w={46} aria-label="Restore">
          <RestoreIcon />
        </IconButton>
        <IconButton $w={46} aria-label="Close window">
          <ThinClose color="#fff" />
        </IconButton>
      </StripTools>
    </TabStrip>
    <Toolbar>
      <IconButton $color="#7d7d7d" aria-label="Back">
        <MdArrowBack size={18} />
      </IconButton>
      <IconButton $color="#7d7d7d" $w={44} aria-label="Forward">
        <MdArrowForward size={18} />
      </IconButton>
      <IconButton $color="#c7c7c7" aria-label="Reload">
        <MdRefresh size={19} />
      </IconButton>
      <Omnibox>
        <IconButton $bg="#3c3c3c" $w={24} $h={24} aria-label="Site information">
          <SiteInfoIcon />
        </IconButton>
        <Url>
          <b>mail.google.com</b>
          /mail/u/0/#inbox?compose=GTvVlcSDZPMZxTbVshSvPWHBsPTNWljGVcRnlpllbnsxBRqMGVRJgZsThV...
        </Url>
        <IconButton $color="#c7c7c7" $w={32} aria-label="Search with Lens">
          <LensIcon />
        </IconButton>
        <IconButton $color="#c7c7c7" $w={32} aria-label="Zoom">
          <MdZoomOut size={18} />
        </IconButton>
        <IconButton $color="#c7c7c7" $w={32} aria-label="Bookmark this tab">
          <MdStarBorder size={19} />
        </IconButton>
      </Omnibox>
      <IconButton $color="#c7c7c7" aria-label="Extensions">
        <PuzzleIcon />
      </IconButton>
      <Divider $m={12} />
      <IconButton $color="#c7c7c7" aria-label="Tab search">
        <TabSearchIcon />
      </IconButton>
      <Divider $m={12} />
      <IconButton $color="#c7c7c7" aria-label="Downloads">
        <DownloadIcon />
      </IconButton>
      <ProfileButton>
        <ChurchLogo size={20} ring={16} />
        Work
      </ProfileButton>
      <IconButton $color="#c7c7c7" aria-label="Chrome menu">
        <MdMoreVert size={19} />
      </IconButton>
    </Toolbar>
    <Bookmarks>
      <GridIcon />
      <Divider $m={-2} />
      <Bookmark href="#youtube" aria-label="YouTube"><YoutubeIcon /></Bookmark>
      <Bookmark href="#gmail" aria-label="Gmail"><GmailLogo /></Bookmark>
      <Bookmark href="#drive" aria-label="Drive"><DriveIcon /></Bookmark>
      <Bookmark href="#start" aria-label="Start"><FIcon /></Bookmark>
      <Bookmark href="#gloo"><GlooText>gloo</GlooText></Bookmark>
      <Bookmark href="#docs" aria-label="Docs"><DocsIcon /></Bookmark>
      <Bookmark href="#church"><ChurchLogo size={16} ring={16} />Redemption Church...</Bookmark>
      <Bookmark href="#list" aria-label="List"><ListAppIcon /></Bookmark>
    </Bookmarks>
  </Frame>
);

const Navigation = () => (
  <>
    <AppRail>
      <IconButton aria-label="Main menu">
        <MdMenu size={22} />
      </IconButton>
      <RailItems>
        <RailItem href="#mail" $active>
          <RailIcon $active>
            <MailIcon />
            <Badge>99+</Badge>
          </RailIcon>
          Mail
        </RailItem>
        <RailItem href="#chat">
          <RailIcon>
            <MdChatBubbleOutline size={18} />
            <WavingHand />
          </RailIcon>
          Chat
        </RailItem>
        <RailItem href="#meet">
          <RailIcon>
            <MeetIcon />
          </RailIcon>
          Meet
        </RailItem>
      </RailItems>
    </AppRail>
    <Sidebar>
      <Brand>
        <GmailLogo width={27} />
        Gmail
      </Brand>
      <ComposeButton>
        <PencilIcon />
        Compose
      </ComposeButton>
      {folders.map(f => (
        <NavItem key={f.label} href={`#${f.label}`} $active={f.active} $bold={f.bold}>
          {f.icon}
          {f.label}
          {f.count && <NavCount $active={f.active}>{f.count}</NavCount>}
        </NavItem>
      ))}
      <LabelsHead>
        Labels
        <IconButton aria-label="Create new label">
          <MdAdd size={18} />
        </IconButton>
      </LabelsHead>
      {['Notes', 'Prayer Team'].map(label => (
        <NavItem key={label} href={`#${label}`}>
          <MdLabel size={17} />
          {label}
        </NavItem>
      ))}
      <Upgrade href="#upgrade">
        <PremiumIcon />
        Upgrade
        <Spacer />
        <ArrowIcon />
      </Upgrade>
    </Sidebar>
  </>
);

const TopBar = () => (
  <Header>
    <SearchBox>
      <MdSearch size={21} />
      <input type="search" placeholder="Search mail" aria-label="Search mail" />
      <MdTune size={20} />
    </SearchBox>
    <Status>
      <i />
      Active
      <MdKeyboardArrowDown size={14} />
    </Status>
    <HeaderTools>
      <IconButton $w={37} aria-label="Support">
        <MdHelpOutline size={22} />
      </IconButton>
      <IconButton $w={37} aria-label="Settings">
        <MdOutlineSettings size={22} />
      </IconButton>
      <IconButton $w={36} aria-label="Ask Gemini">
        <SparkIcon size={20} />
      </IconButton>
      <IconButton $w={36} aria-label="Google apps">
        <MdApps size={22} />
      </IconButton>
    </HeaderTools>
    <Account aria-label="Google Account">
      <OrgLogo>
        <ChurchLogo size={15} ring={14} />
        <span>
          Redemption
          <small>CHURCH</small>
        </span>
      </OrgLogo>
      <ChurchLogo size={29} ring={12} />
    </Account>
  </Header>
);

const Inbox = () => (
  <MailPanel>
    <ListToolbar>
      <Check type="checkbox" aria-label="Select all" $dark />
      <IconButton $w={22} aria-label="Select options">
        <MdArrowDropDown size={18} />
      </IconButton>
      <IconButton $w={50} aria-label="Refresh">
        <MdRefresh size={17} />
      </IconButton>
      <IconButton $w={22} aria-label="More">
        <MdMoreVert size={18} />
      </IconButton>
      <PageInfo>1–50 of 1,817</PageInfo>
      <IconButton $color="#b5b7b9" aria-label="Newer">
        <MdChevronLeft size={18} />
      </IconButton>
      <IconButton $w={44} aria-label="Older">
        <MdChevronRight size={18} />
      </IconButton>
      <IconButton $w={46} aria-label="Density">
        <MdReorder size={18} />
        <MdArrowDropDown size={18} />
      </IconButton>
      <IconButton $w={56} aria-label="Input tools">
        <MdKeyboard size={18} />
        <MdArrowDropDown size={18} />
      </IconButton>
    </ListToolbar>
    <ListScroll>
      <MailList>
        {mails.map(([from, count, subject], i) => (
          <MailRow key={i}>
            <Check type="checkbox" aria-label={`Select ${subject}`} />
            <StarButton aria-label="Star">
              <MdStarBorder size={16} />
            </StarButton>
            <Sender>
              {from} {count && <small>{count}</small>}
            </Sender>
            <Subject>{subject}</Subject>
          </MailRow>
        ))}
      </MailList>
      <ListThumb />
    </ListScroll>
    <Preview>
      <p>No conversations selected</p>
      <small>Last account activity: 0 minutes ago</small>
    </Preview>
  </MailPanel>
);

const FormatToolbar = () => (
  <FormatBar>
    <IconButton $w={24} aria-label="Undo"><UndoIcon /></IconButton>
    <IconButton $w={24} aria-label="Redo"><UndoIcon flip /></IconButton>
    <Divider $w={1} $m={2} $color="#c4c7c5" />
    <FontPicker>
      <select aria-label="Font" defaultValue="Sans Serif">
        <option>Sans Serif</option>
      </select>
      <MdArrowDropDown size={16} />
    </FontPicker>
    <Divider $w={1} $color="#c4c7c5" />
    <IconButton $w={46} $pair aria-label="Size"><SizeIcon /><MdArrowDropDown size={16} /></IconButton>
    <Divider $w={1} $m={1} $color="#c4c7c5" />
    <IconButton $w={27} aria-label="Bold"><MdFormatBold size={19} /></IconButton>
    <IconButton $w={27} aria-label="Italic"><MdFormatItalic size={19} /></IconButton>
    <IconButton $w={27} aria-label="Underline"><MdFormatUnderlined size={18} /></IconButton>
    <IconButton $w={39} $pair aria-label="Text color"><ColorIcon /><MdArrowDropDown size={16} /></IconButton>
    <Divider $w={1} $m={2} $color="#c4c7c5" />
    <IconButton $w={40} $pair aria-label="Align"><MdFormatAlignLeft size={17} /><MdArrowDropDown size={16} /></IconButton>
    <IconButton $w={27} aria-label="Numbered list"><MdFormatListNumbered size={17} /></IconButton>
    <IconButton $w={27} aria-label="Bulleted list"><MdFormatListBulleted size={17} /></IconButton>
    <IconButton $w={27} aria-label="Indent less"><MdFormatIndentDecrease size={17} /></IconButton>
    <Divider $w={1} $m={1} $color="#c4c7c5" />
    <IconButton $w={22} aria-label="More formatting"><MdArrowDropDown size={16} /></IconButton>
  </FormatBar>
);

const ComposeWindow = () => {
  const [before, setBefore] = useState('So grateful for you, Vickie');
  const [after, setAfter] = useState('Happy New Year!');

  return (
    <Compose>
      <ComposeHead>
        <h2>Draft saved</h2>
        <IconButton $w={18} aria-label="Minimize">
          <Svg size={10} box={10} stroke="currentColor" strokeWidth="2">
            <path d="M1 8h8" />
          </Svg>
        </IconButton>
        <IconButton $w={18} aria-label="Full screen"><ExpandIcon /></IconButton>
        <IconButton $w={18} aria-label="Save and close"><ThinClose size={11} stroke={1.8} /></IconButton>
      </ComposeHead>
      <ComposeBody>
        <ComposeMain>
          <Field>
            <Recipient>vlasong2020@gmail.com</Recipient>
          </Field>
          <Field>
            <input value={before} onChange={e => setBefore(e.target.value)} aria-label="Subject" />
            <Heart />
            <input value={after} onChange={e => setAfter(e.target.value)} aria-label="Subject, continued" />
            <Caret />
          </Field>
          <MessageWrap>
            <Message role="textbox" aria-label="Message Body">
              <p>Hi Vickie,</p>
              <p>
                I’m really glad you were with us at Redemption yesterday. I not only heard you worshiping, I
                <br />
                also noticed you greeting people and making them feel welcome. That blessed me so much.
              </p>
              <p>
                I see the heart of a shepherd in you - the same heart you’ve shown for so many years as
                <br />
                you’ve served the body of Christ. Our church needs that kind of presence and example in the
                <br />
                room.
              </p>
              <p>
                Sarah and I would love to have dinner with you the next time you come our way, or we can
                <br />
                drive up toward Sanger to hang out with you. We look forward to getting to know you better.
              </p>
              <p>
                I hope you have a very Happy New Year, and I would love to have you back with us again
                <br />
                whenever you’re able to join us.
              </p>
              <p>
                Grace and peace,
                <br />
                Chris
                <br />
                Redemption Church
              </p>
              <Signature>
                <SignatureLogo>
                  <ChurchLogo size={115} />
                  <Socials>
                    <SocialLink href="#facebook" aria-label="Facebook"><FaFacebookF size={12} /></SocialLink>
                    <SocialLink href="#instagram" aria-label="Instagram"><FaInstagram size={14} /></SocialLink>
                  </Socials>
                </SignatureLogo>
                <SignatureText>
                  <h3>Redemption Church</h3>
                  Love, Grow, Serve, Go!
                  <hr />
                  <ContactLine>
                    <MdPhone size={12} />
                    <a href="tel:4694678111">(469) 467-8111</a>
                  </ContactLine>
                  <ContactLine>
                    <MdEmail size={12} />
                    <a href="mailto:info@redemptionplano.com">info@redemptionplano.com</a>
                  </ContactLine>
                  <ContactLine>
                    <LockIcon />
                    <a href="#site">www.redemptionplano.com</a>
                  </ContactLine>
                </SignatureText>
              </Signature>
            </Message>
            <MessageThumb />
          </MessageWrap>
          <FormatToolbar />
          <Caution>
            <MdDomainDisabled size={18} />
            <p>
              <b>Be cautious about sharing sensitive information.</b>
              vlasong2020@gmail.com is outside your organization and isn't in your
              <br />
              contacts.
            </p>
            <IconButton $w={16} $color="#1f1f1f" aria-label="Dismiss"><MdClose size={18} /></IconButton>
          </Caution>
          <SendBar>
            <SendButton>Send</SendButton>
            <SendMore aria-label="More send options"><MdArrowDropDown size={18} /></SendMore>
            <TextTools $w={25} $h={25} $bg="#d3e3fd" aria-label="Formatting options">Aa</TextTools>
            {sendTools.map(([label, icon]) => (
              <IconButton key={label} $w={29} aria-label={label}>{icon}</IconButton>
            ))}
            <IconButton $w={35} aria-label="More options"><MdMoreVert size={17} /></IconButton>
            <Spacer />
            <IconButton aria-label="Discard draft"><TrashIcon /></IconButton>
          </SendBar>
        </ComposeMain>
        <ComposeScroll>
          <Arrow />
          <ComposeThumb />
          <Arrow down />
        </ComposeScroll>
      </ComposeBody>
    </Compose>
  );
};

const App = () => (
  <Window>
    <GlobalStyle />
    <BrowserFrame />
    <Gmail>
      <Navigation />
      <Center>
        <TopBar />
        <Body>
          <Inbox />
          <SidePanel>
            <PanelLink aria-label="Calendar"><CalendarApp /></PanelLink>
            <PanelLink aria-label="Keep"><KeepApp /></PanelLink>
            <PanelLink aria-label="Tasks"><TasksApp /></PanelLink>
            <PanelLink aria-label="Contacts"><ContactsApp /></PanelLink>
            <hr />
            <IconButton $h={18} $color="#1f1f1f" aria-label="Get add-ons"><MdAdd size={20} /></IconButton>
            <Spacer />
            <IconButton aria-label="Hide side panel"><MdChevronRight size={18} /></IconButton>
          </SidePanel>
        </Body>
      </Center>
      <ComposeWindow />
    </Gmail>
  </Window>
);

export default App;
